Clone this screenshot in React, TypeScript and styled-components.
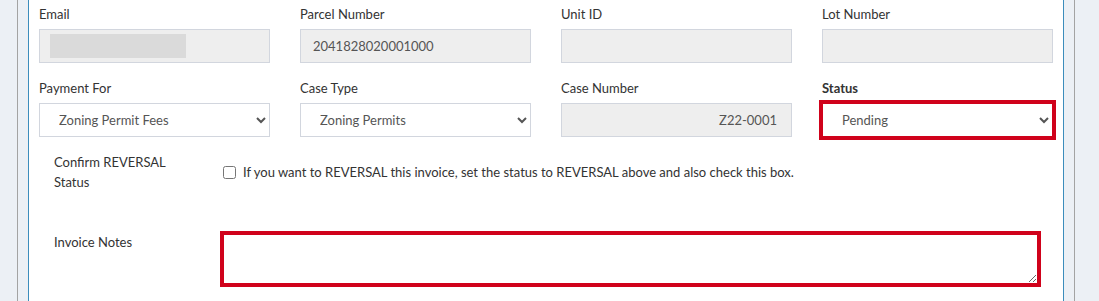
import React from "react";
import styled, { createGlobalStyle } from "styled-components";

const GlobalStyle = createGlobalStyle`
  html, body { margin: 0; padding: 0; background: #ecf0f5; }
  body { font-family: "Lato", "Liberation Sans", sans-serif; font-size: 13px; color: #333; }
  * { box-sizing: border-box; }
`;

const Page = styled.div`
  padding-left: 17px;
  height: 301px;
  overflow: hidden;
`;

const Frame = styled.div`
  width: 1058px;
  height: 100%;
  border-left: 1px solid #a3a3a3;
  border-right: 1px solid #a3a3a3;
  padding: 0 10px;
  background: #ecf0f5;
`;

const Panel = styled.div`
  height: 100%;
  background: #fff;
  border-left: 1px solid #3c8dbc;
  border-right: 1px solid #3c8dbc;
  padding: 4px 10px 0;
`;

const Grid = styled.div`
  display: grid;
  grid-template-columns: repeat(4, 231px);
  column-gap: 30px;
  row-gap: 15px;
`;

const Group = styled.div`
  display: flex;
  flex-direction: column;
  gap: 5px;
`;

const Label = styled.label<{ $bold?: boolean }>`
  line-height: 20px;
  color: #333;
  font-weight: ${(p) => (p.$bold ? 700 : 400)};
`;

const Control = styled.input<{ $right?: boolean }>`
  height: 34px;
  width: 100%;
  border: 1px solid #d2d6de;
  background: #eee;
  padding: 6px ${(p) => (p.$right ? 14 : 12)}px 6px 12px;
  font: inherit;
  color: #555;
  text-align: ${(p) => (p.$right ? "right" : "left")};
  outline: none;
`;

const Box = styled.div`
  height: 34px;
  border: 1px solid #d2d6de;
  background: #eee;
  padding: 0 10px;
  display: flex;
  align-items: center;
`;

const Redaction = styled.span`
  width: 136px;
  height: 24px;
  background: #dadada;
`;

const Select = styled.select<{ $flag?: boolean }>`
  height: 34px;
  width: 100%;
  border: 1px solid ${(p) => (p.$flag ? "#d0021b" : "#d2d6de")};
  outline: ${(p) => (p.$flag ? "3px solid #d0021b" : "none")};
  background: #fff;
  padding: 6px 8px 6px 15px;
  font: inherit;
  color: #555;
`;

const HRow = styled.div<{ $top: number; $align?: string }>`
  display: grid;
  grid-template-columns: 169px 1fr;
  margin-top: ${(p) => p.$top}px;
  align-items: ${(p) => p.$align || "start"};
`;

const SideLabel = styled.label`
  padding: 0 15px;
  line-height: 20px;
  color: #333;
`;

const FieldCol = styled.div<{ $pt?: number }>`
  padding: ${(p) => p.$pt || 0}px 15px 0;
`;

const CheckLine = styled.label`
  display: flex;
  align-items: center;
  gap: 7px;
  line-height: 20px;
  color: #333;
`;

const Check = styled.input`
  margin: 0;
  width: 13px;
  height: 13px;
`;

const Notes = styled.textarea`
  display: block;
  width: 100%;
  height: 50px;
  border: 1px solid #d0021b;
  outline: 3px solid #d0021b;
  resize: vertical;
  font: inherit;
`;

export default function App() {
  return (
    <>
      <GlobalStyle />
      <Page>
        <Frame>
          <Panel>
            <Grid>
              <Group>
                <Label>Email</Label>
                <Box>
                  <Redaction />
                </Box>
              </Group>
              <Group>
                <Label>Parcel Number</Label>
                <Control disabled defaultValue="2041828020001000" />
              </Group>
              <Group>
                <Label>Unit ID</Label>
                <Control disabled defaultValue="" />
              </Group>
              <Group>
                <Label>Lot Number</Label>
                <Control disabled defaultValue="" />
              </Group>
              <Group>
                <Label>Payment For</Label>
                <Select defaultValue="zp">
                  <option value="zp">Zoning Permit Fees</option>
                </Select>
              </Group>
              <Group>
                <Label>Case Type</Label>
                <Select defaultValue="zp">
                  <option value="zp">Zoning Permits</option>
                </Select>
              </Group>
              <Group>
                <Label>Case Number</Label>
                <Control disabled $right defaultValue="Z22-0001" />
              </Group>
              <Group>
                <Label $bold>Status</Label>
                <Select $flag defaultValue="p">
                  <option value="p">Pending</option>
                </Select>
              </Group>
            </Grid>
            <HRow $top={15} $align="center">
              <SideLabel>
                Confirm REVERSAL
                <br />
                Status
              </SideLabel>
              <FieldCol>
                <CheckLine>
                  <Check type="checkbox" />
                  If you want to REVERSAL this invoice, set the status to REVERSAL above and also check this box.
                </CheckLine>
              </FieldCol>
            </HRow>
            <HRow $top={40}>
              <SideLabel>Invoice Notes</SideLabel>
              <FieldCol $pt={2}>
                <Notes />
              </FieldCol>
            </HRow>
          </Panel>
        </Frame>
      </Page>
    </>
  );
}
